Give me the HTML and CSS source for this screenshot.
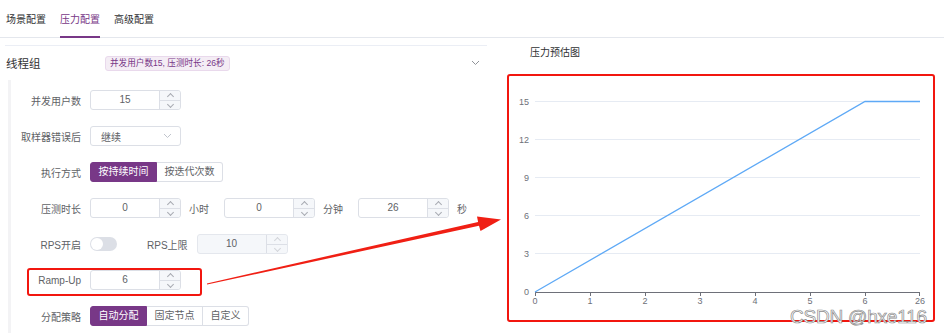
FILE: index.html
```html
<!DOCTYPE html>
<html lang="zh-CN">
<head>
  <meta charset="UTF-8">
  <title>压力配置</title>
  <link rel="stylesheet" href="styles.css">
</head>
<body>

<div class="tabs">
  <span class="tab">场景配置</span>
  <span class="tab active">压力配置</span>
  <span class="tab">高级配置</span>
</div>

<div class="main">
  <div class="left">
    <div class="collapse-head">
      <span class="group-title">线程组</span>
      <span class="tag">并发用户数15, 压测时长: 26秒</span>
      <svg class="head-arrow" width="9" height="6" viewBox="0 0 9 6"><path d="M1 1 L4.5 4.5 L8 1" fill="none" stroke="#909399" stroke-width="1"/></svg>
    </div>

    <div class="form">
      <div class="row">
        <label class="label">并发用户数</label>
        <div class="num">
          <span class="num-val">15</span>
          <span class="num-ctrl"><i class="up"></i><i class="down"></i></span>
        </div>
      </div>

      <div class="row">
        <label class="label">取样器错误后</label>
        <div class="select">
          <span>继续</span>
          <svg width="9" height="6" viewBox="0 0 9 6"><path d="M1 1 L4.5 4.5 L8 1" fill="none" stroke="#c0c4cc" stroke-width="1"/></svg>
        </div>
      </div>

      <div class="row">
        <label class="label">执行方式</label>
        <div class="btn-group">
          <span class="rb on">按持续时间</span><span class="rb">按迭代次数</span>
        </div>
      </div>

      <div class="row">
        <label class="label">压测时长</label>
        <div class="num">
          <span class="num-val">0</span>
          <span class="num-ctrl"><i class="up"></i><i class="down"></i></span>
        </div>
        <span class="unit">小时</span>
        <div class="num">
          <span class="num-val">0</span>
          <span class="num-ctrl"><i class="up"></i><i class="down"></i></span>
        </div>
        <span class="unit">分钟</span>
        <div class="num">
          <span class="num-val">26</span>
          <span class="num-ctrl"><i class="up"></i><i class="down"></i></span>
        </div>
        <span class="unit">秒</span>
      </div>

      <div class="row">
        <label class="label">RPS开启</label>
        <span class="switch"><span class="knob"></span></span>
        <label class="sub-label">RPS上限</label>
        <div class="num disabled">
          <span class="num-val">10</span>
          <span class="num-ctrl"><i class="up"></i><i class="down"></i></span>
        </div>
      </div>

      <div class="row marked">
        <label class="label">Ramp-Up</label>
        <div class="num">
          <span class="num-val">6</span>
          <span class="num-ctrl"><i class="up"></i><i class="down"></i></span>
        </div>
        <span class="mark"></span>
      </div>

      <div class="row">
        <label class="label">分配策略</label>
        <div class="btn-group">
          <span class="rb on">自动分配</span><span class="rb">固定节点</span><span class="rb">自定义</span>
        </div>
      </div>
    </div>
  </div>

  <div class="right">
    <div class="chart-title">压力预估图</div>
    <div class="chart-box">
      <svg class="chart" width="424" height="244" viewBox="0 0 424 244">
        <g stroke="#e6ebf3" stroke-width="1">
          <line x1="26" y1="25.5" x2="411" y2="25.5"/>
          <line x1="26" y1="63.5" x2="411" y2="63.5"/>
          <line x1="26" y1="101.5" x2="411" y2="101.5"/>
          <line x1="26" y1="139.5" x2="411" y2="139.5"/>
          <line x1="26" y1="177.5" x2="411" y2="177.5"/>
        </g>
        <g fill="#6e7079" font-size="9" text-anchor="end">
          <text x="20" y="29">15</text>
          <text x="20" y="67">12</text>
          <text x="20" y="105">9</text>
          <text x="20" y="143">6</text>
          <text x="20" y="181">3</text>
          <text x="20" y="219">0</text>
        </g>
        <g stroke="#6e7079" stroke-width="1">
          <line x1="26" y1="216.5" x2="411" y2="216.5"/>
          <line x1="26.5" y1="216" x2="26.5" y2="220"/>
          <line x1="81.5" y1="216" x2="81.5" y2="220"/>
          <line x1="136.5" y1="216" x2="136.5" y2="220"/>
          <line x1="191.5" y1="216" x2="191.5" y2="220"/>
          <line x1="246.5" y1="216" x2="246.5" y2="220"/>
          <line x1="301.5" y1="216" x2="301.5" y2="220"/>
          <line x1="356.5" y1="216" x2="356.5" y2="220"/>
          <line x1="410.5" y1="216" x2="410.5" y2="220"/>
        </g>
        <g fill="#6e7079" font-size="9" text-anchor="middle">
          <text x="26" y="228">0</text>
          <text x="81" y="228">1</text>
          <text x="136" y="228">2</text>
          <text x="191" y="228">3</text>
          <text x="246" y="228">4</text>
          <text x="301" y="228">5</text>
          <text x="356" y="228">6</text>
          <text x="411" y="228">26</text>
        </g>
        <polyline points="26,216 356,25.5 411,25.5" fill="none" stroke="#5ea9f6" stroke-width="1.3"/>
      </svg>
    </div>
  </div>
</div>

<svg class="arrow" width="944" height="333" viewBox="0 0 944 333">
  <polygon points="207.1,284.6 479,225.8 480.5,231 501,219.5 477,216.5 478.1,221.9 206.9,283.4" fill="#f01f14"/>
</svg>

<div class="watermark">CSDN @hxe116</div>

</body>
</html>
```

FILE: styles.css
```css
* { box-sizing: border-box; }
body {
  margin: 0;
  background: #fff;
  font-family: "Liberation Sans", "Noto Sans CJK SC", sans-serif;
  font-size: 10px;
  color: #606266;
  position: relative;
  width: 944px;
  height: 333px;
  overflow: hidden;
}
.tabs {
  display: flex;
  gap: 14px;
  height: 38px;
  padding-left: 6px;
  border-bottom: 1px solid #e4e7ed;
}
.tab {
  display: flex;
  align-items: center;
  color: #303133;
  font-size: 10px;
  border-bottom: 2px solid transparent;
  margin-bottom: -1px;
  padding-top: 1px;
}
.tab.active {
  color: #783887;
  border-bottom-color: #783887;
}
.main {
  display: flex;
}
.left {
  width: 482px;
  margin-left: 5px;
}
.collapse-head {
  margin-top: 7px;
  height: 35px;
  border-top: 1px solid #ebeef5;
  display: flex;
  align-items: center;
  padding-left: 1px;
}
.group-title {
  width: 99px;
  font-size: 11.5px;
  color: #303133;
}
.tag {
  height: 15px;
  line-height: 13px;
  padding: 0 4px;
  background: #f4edf5;
  border: 1px solid #e9d9ec;
  border-radius: 3px;
  color: #783887;
  font-size: 8.6px;
}
.head-arrow {
  margin-left: auto;
  margin-right: 7px;
}
.form {
  margin-left: 3px;
  border-left: 3px solid #f3f3f5;
  padding-top: 2px;
}
.row {
  height: 36px;
  display: flex;
  align-items: center;
  position: relative;
}
.label {
  width: 79px;
  padding-right: 9px;
  text-align: right;
  color: #606266;
}
.num {
  width: 91px;
  height: 20px;
  border: 1px solid #dcdfe6;
  border-radius: 3px;
  display: flex;
  color: #606266;
}
.num-val {
  flex: 1;
  text-align: center;
  line-height: 18px;
}
.num-ctrl {
  width: 21px;
  border-left: 1px solid #dcdfe6;
  background: #f5f7fa;
  display: flex;
  flex-direction: column;
  border-radius: 0 3px 3px 0;
}
.num-ctrl i {
  flex: 1;
  position: relative;
}
.num-ctrl .up {
  border-bottom: 1px solid #dcdfe6;
}
.num-ctrl i::after {
  content: "";
  position: absolute;
  left: 8px;
  width: 4px;
  height: 4px;
  border-left: 1px solid #a8abb2;
  border-top: 1px solid #a8abb2;
}
.num-ctrl .up::after {
  top: 3px;
  transform: rotate(45deg);
}
.num-ctrl .down::after {
  top: 1px;
  transform: rotate(225deg);
}
.num.disabled {
  background: #f5f7fa;
  border-color: #e4e7ed;
  color: #606266;
}
.num.disabled .num-ctrl i::after {
  border-color: #d3d5da;
}
.unit {
  margin: 0 15px 0 8px;
  color: #606266;
}
.select {
  width: 91px;
  height: 20px;
  border: 1px solid #dcdfe6;
  border-radius: 3px;
  display: flex;
  align-items: center;
  justify-content: space-between;
  padding: 0 8px 0 10px;
}
.btn-group {
  display: flex;
}
.rb {
  height: 20px;
  line-height: 18px;
  padding: 0 7.5px;
  border: 1px solid #dcdfe6;
  border-left: none;
  color: #606266;
  background: #fff;
}
.rb:first-child {
  border-left: 1px solid #dcdfe6;
  border-radius: 3px 0 0 3px;
}
.rb:last-child {
  border-radius: 0 3px 3px 0;
}
.rb.on {
  background: #783887;
  border-color: #783887;
  color: #fff;
}
.switch {
  width: 27px;
  height: 14px;
  border-radius: 7px;
  background: #dcdfe6;
  position: relative;
}
.knob {
  position: absolute;
  left: 1px;
  top: 1px;
  width: 12px;
  height: 12px;
  border-radius: 50%;
  background: #fff;
}
.sub-label {
  margin: 0 9px 0 30px;
}
.mark {
  position: absolute;
  left: 16px;
  top: 6px;
  width: 175px;
  height: 28px;
  border: 2px solid #f2160f;
  border-radius: 3px;
}
.right {
  flex: 1;
  padding-top: 8px;
}
.chart-title {
  margin-left: 43px;
  line-height: 14px;
  color: #303133;
}
.chart-box {
  margin-top: 14px;
  margin-left: 20px;
  width: 428px;
  height: 248px;
  border: 2px solid #f2160f;
  border-radius: 3px;
}
.chart {
  display: block;
  font-family: "Liberation Sans", sans-serif;
}
.arrow {
  position: absolute;
  left: 0;
  top: 0;
  pointer-events: none;
}
.watermark {
  position: absolute;
  left: 790px;
  top: 308px;
  font-size: 19px;
  line-height: 17px;
  color: #fff;
  -webkit-text-stroke: 0.7px #8a8a8a;
  letter-spacing: -0.2px;
}
```
